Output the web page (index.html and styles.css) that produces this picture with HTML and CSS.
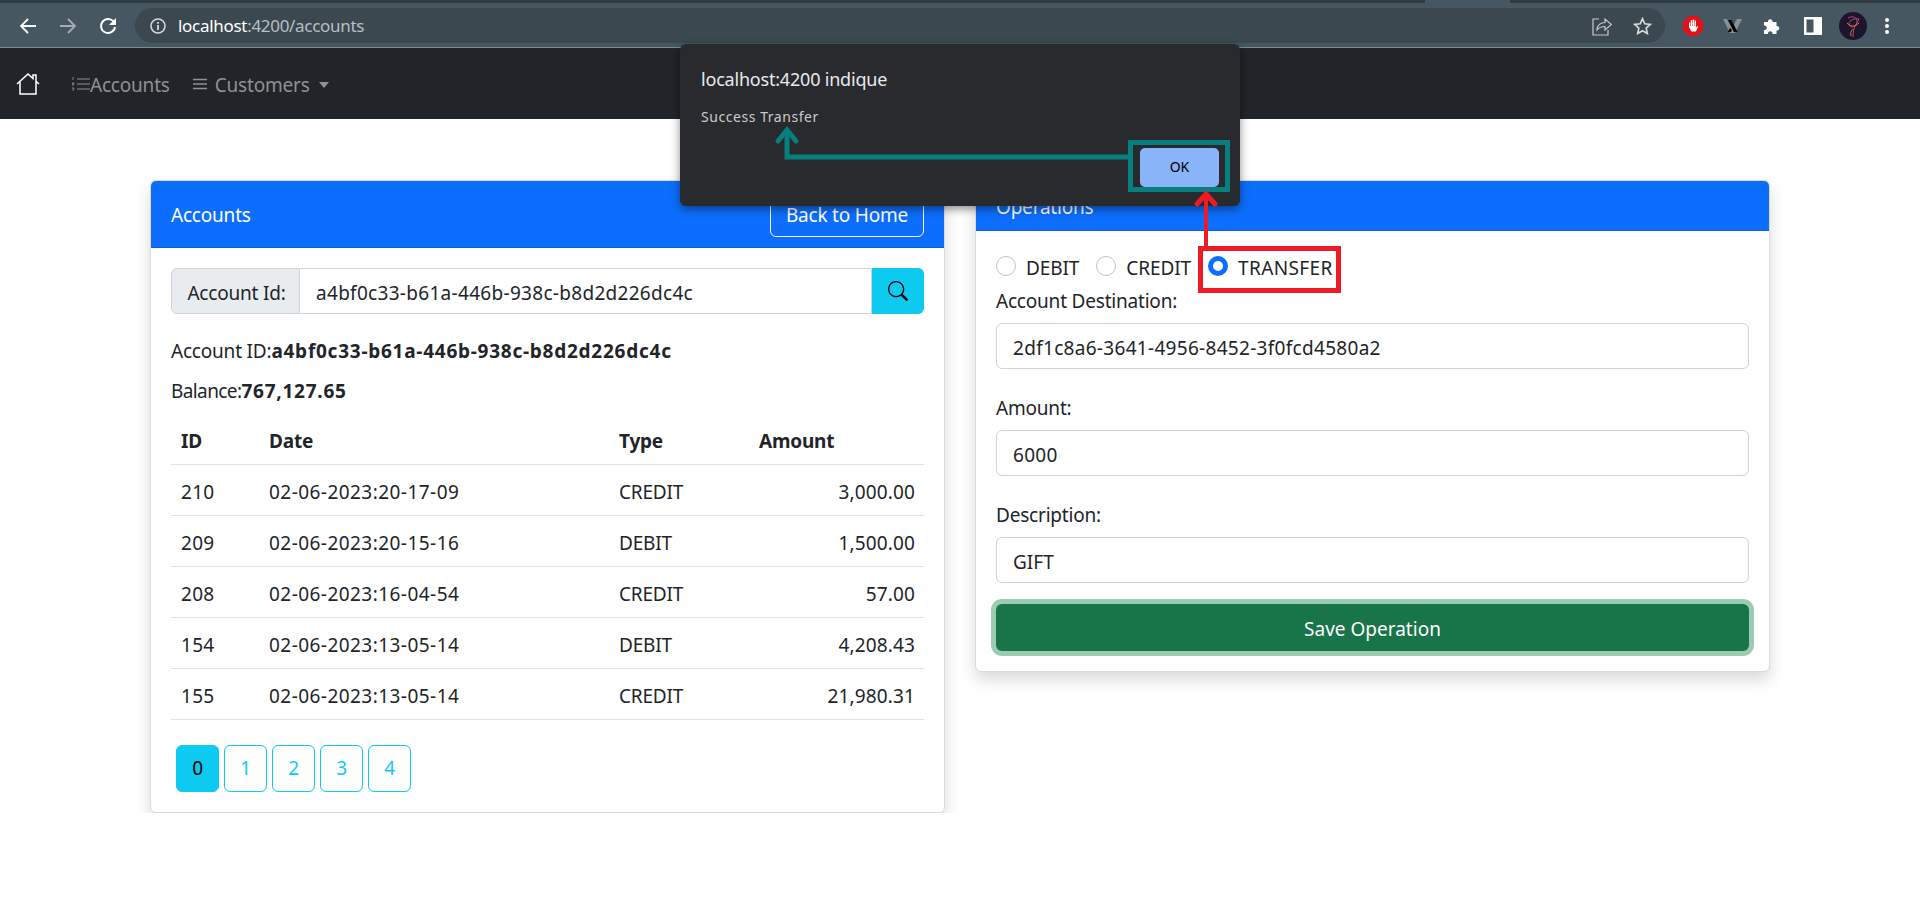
FILE: index.html
```html
<!DOCTYPE html>
<html lang="en">
<head>
    <meta charset="UTF-8">
    <title>Accounts</title>
    <link rel="stylesheet" href="styles.css">
</head>
<body>
    <div class="tabstrip"></div>
    <div class="toolbar">
        <svg class="tool-icon" width="18" height="18" viewBox="0 0 18 18"><path d="M17 9H2M9 2L2 9l7 7" fill="none" stroke="#fff" stroke-width="1.8"/></svg>
        <svg class="tool-icon dim" width="18" height="18" viewBox="0 0 18 18"><path d="M1 9h15M9 2l7 7-7 7" fill="none" stroke="#a3adb2" stroke-width="1.8"/></svg>
        <svg class="tool-icon" width="18" height="18" viewBox="0 0 18 18"><path d="M15.4 6A7 7 0 1 0 16 10" fill="none" stroke="#fff" stroke-width="1.9"/><path d="M17 1v7h-7z" fill="#fff"/></svg>
        <div class="omnibox">
            <svg width="16" height="16" viewBox="0 0 16 16"><circle cx="8" cy="8" r="7" fill="none" stroke="#d5d9db" stroke-width="1.6"/><path d="M8 7v5M8 4v1.8" stroke="#d5d9db" stroke-width="1.8"/></svg>
            <span class="url"><span class="host">localhost</span>:4200/accounts</span>
            <span class="omni-right">
                <svg width="20" height="20" viewBox="0 0 20 20"><path d="M7 3H1v16h15v-5" fill="none" stroke="#c4cacd" stroke-width="1.2"/><path d="M5 14c0-5 4-7.500 8-7.500V3l6.500 5.500L13 14v-3.500c-4 0-6 1-8 3.500z" fill="none" stroke="#c4cacd" stroke-width="1.2"/></svg>
                <svg width="19" height="18" viewBox="0 0 19 18"><path d="M9.500 1.800l2.300 5 5.400.6-4 3.700 1.100 5.400-4.800-2.700-4.800 2.700 1.100-5.400-4-3.700 5.400-.6z" fill="none" stroke="#d5d9db" stroke-width="1.700"/></svg>
            </span>
        </div>
        <div class="extensions">
            <svg width="22" height="22" viewBox="0 0 22 22"><path d="M7 1h8l6 6v8l-6 6H7l-6-6V7z" fill="#e3121a"/><path d="M7 12V7.500h1.300V11h.5V5h1.400v6h.5V4.500h1.400V11h.5V5.500h1.300V13l1.300-2 1 .6-2.300 4.900H9.500z" fill="#fff"/></svg>
            <svg width="21" height="16" viewBox="0 0 21 16"><path d="M1 1h4l5 9 5-9h5l-7 14h-5z" fill="#8a8f91"/><path d="M6 2h3.500l6 12H12zM6 14l2-4 2 2-1 2z" fill="#000"/></svg>
            <svg width="18" height="18" viewBox="0 0 18 18"><path d="M1 5h4a2.300 2.300 0 1 1 4.500 0h4v4a2.300 2.300 0 1 1 0 4.500V17h-4a2.300 2.300 0 1 0-4.500 0H1v-4a2.300 2.300 0 1 0 0-4.500z" fill="#fff"/></svg>
            <svg class="side-panel" width="18" height="18" viewBox="0 0 18 18"><path d="M0 0h18v18H0zM2.500 2.500v13h7v-13z" fill="#fff" fill-rule="evenodd"/></svg>
            <svg class="avatar" width="28" height="28" viewBox="0 0 28 28"><circle cx="14" cy="14" r="14" fill="#1d1530"/><path d="M9 6c5-3 10 0 9 5s-8 5-8 1 6-6 10-5c-2 5-6 7-6 18" fill="none" stroke="#b0506e" stroke-width="1"/><path d="M8 11c3 4 8 4 12 0M14 17c-2 2-3 4-2 7" fill="none" stroke="#d8742c" stroke-width="1"/></svg>
            <svg class="dots" width="4" height="16" viewBox="0 0 4 16"><circle cx="2" cy="2" r="2" fill="#fff"/><circle cx="2" cy="8" r="2" fill="#fff"/><circle cx="2" cy="14" r="2" fill="#fff"/></svg>
        </div>
    </div>

    <nav class="navbar">
        <svg class="home-icon" width="24" height="22" viewBox="0 0 24 22"><path d="M1 11L12 1l5 4.500V2h3v6.300l3 2.700M4 9v12h16V9" fill="none" stroke="#fff" stroke-width="1.500"/></svg>
        <a class="nav-link accounts-link" href="#">
            <svg width="18" height="16" viewBox="0 0 18 16"><path d="M5 3h13M5 8h13M5 13h13" stroke="#8f9194" stroke-width="1"/><path d="M1 1v3M0 7h2v1H0v1h2M0 12h2v1H1m-1 1h2" stroke="#8f9194" stroke-width=".8" fill="none"/></svg><span>Accounts</span>
        </a>
        <a class="nav-link customers-link" href="#">
            <svg width="14" height="12" viewBox="0 0 14 12"><path d="M0 1.500h14M0 6h14M0 10.500h14" stroke="#8f9194" stroke-width="1.600"/></svg>
            <span>Customers</span>
            <span class="caret"></span>
        </a>
    </nav>

    <div class="container">
        <div class="card">
            <div class="card-header accounts-header">
                <span class="header-title">Accounts</span>
                <a class="btn-outline-light" href="#">Back to Home</a>
            </div>
            <div class="card-body">
                <div class="input-group">
                    <span class="input-group-text">Account Id:</span>
                    <input class="group-input num" type="text" value="a4bf0c33-b61a-446b-938c-b8d2d226dc4c">
                    <button class="btn-search" type="button">
                        <svg width="20" height="20" viewBox="0 0 16 16"><path d="M11.742 10.344a6.500 6.500 0 1 0-1.397 1.398l3.850 3.850a1 1 0 0 0 1.415-1.414l-3.850-3.850zM12 6.500a5.500 5.500 0 1 1-11 0 5.500 5.500 0 0 1 11 0z"/></svg>
                    </button>
                </div>
                <p class="info first-info">Account ID:<b>a4bf0c33-b61a-446b-938c-b8d2d226dc4c</b></p>
                <p class="info balance">Balance:<b>767,127.65</b></p>
                <table class="table">
                    <colgroup>
                        <col class="col-id"><col class="col-date"><col class="col-type"><col>
                    </colgroup>
                    <thead>
                        <tr><th>ID</th><th>Date</th><th>Type</th><th>Amount</th></tr>
                    </thead>
                    <tbody>
                        <tr><td class="num">210</td><td class="date">02-06-2023:20-17-09</td><td class="type">CREDIT</td><td class="amount">3,000.00</td></tr>
                        <tr><td class="num">209</td><td class="date">02-06-2023:20-15-16</td><td class="type">DEBIT</td><td class="amount">1,500.00</td></tr>
                        <tr><td class="num">208</td><td class="date">02-06-2023:16-04-54</td><td class="type">CREDIT</td><td class="amount">57.00</td></tr>
                        <tr><td class="num">154</td><td class="date">02-06-2023:13-05-14</td><td class="type">DEBIT</td><td class="amount">4,208.43</td></tr>
                        <tr><td class="num">155</td><td class="date">02-06-2023:13-05-14</td><td class="type">CREDIT</td><td class="amount">21,980.31</td></tr>
                    </tbody>
                </table>
                <div class="pages">
                    <a class="page active" href="#">0</a>
                    <a class="page" href="#">1</a>
                    <a class="page" href="#">2</a>
                    <a class="page" href="#">3</a>
                    <a class="page" href="#">4</a>
                </div>
            </div>
        </div>

        <div class="card">
            <div class="card-header operations-header">Operations</div>
            <div class="card-body">
                <div class="radios">
                    <label class="radio-label"><input type="radio" name="type"><span>DEBIT</span></label>
                    <label class="radio-label"><input type="radio" name="type"><span>CREDIT</span></label>
                    <label class="radio-label transfer"><input type="radio" name="type" checked><span>TRANSFER</span></label>
                </div>
                <div class="form-group">
                    <label for="dest">Account Destination:</label>
                    <input id="dest" class="form-control num" type="text" value="2df1c8a6-3641-4956-8452-3f0fcd4580a2">
                </div>
                <div class="form-group">
                    <label for="amount">Amount:</label>
                    <input id="amount" class="form-control num" type="text" value="6000">
                </div>
                <div class="form-group">
                    <label for="description">Description:</label>
                    <input id="description" class="form-control" type="text" value="GIFT">
                </div>
                <button class="btn-save" type="button">Save Operation</button>
            </div>
        </div>
    </div>

    <div class="alert-dialog">
        <div class="alert-title">localhost:4200 indique</div>
        <div class="alert-text">Success Transfer</div>
        <button class="alert-ok" type="button">OK</button>
    </div>

    <!-- annotations drawn on top of the screenshot -->
    <svg class="annotations" width="1920" height="920" viewBox="0 0 1920 920">
        <rect x="1130.500" y="142.500" width="97" height="47" fill="none" stroke="#077f7f" stroke-width="5"/>
        <path d="M1128 157H787V130" fill="none" stroke="#077f7f" stroke-width="5"/>
        <path d="M778 141l9-11 9 11" fill="none" stroke="#077f7f" stroke-width="5" stroke-linecap="round"/>
        <rect x="1200.500" y="248.500" width="138" height="42" fill="none" stroke="#ed1c24" stroke-width="5"/>
        <path d="M1206 246V195" fill="none" stroke="#ed1c24" stroke-width="4"/>
        <path d="M1197 204l9-10 9 10" fill="none" stroke="#ed1c24" stroke-width="5" stroke-linecap="round"/>
    </svg>
</body>
</html>
```

FILE: styles.css
```css
body {
    font-family: "Noto Sans", "Open Sans", sans-serif;
    font-size: 19px;
    line-height: 27px;
    letter-spacing: -0.2px;
    margin: 0;
    background-color: #fff;
    color: #212529;
}
.num {
    letter-spacing: 0.3px;
}
.tabstrip {
    height: 3px;
    background: linear-gradient(to right, #2f3d42 1425px, #465761 1425px, #465761 1510px, #2f3d42 1510px);
}
.toolbar {
    height: 45px;
    box-sizing: border-box;
    padding: 5px 0 0 19px;
    display: flex;
    align-items: flex-start;
    background-color: #465761;
    border-bottom: 1px solid #7d8d94;
}
.tool-icon {
    margin: 9px 22px 0 0;
}
.tool-icon:nth-child(3) {
    margin-right: 18px;
}
.omnibox {
    width: 1530px;
    height: 35px;
    box-sizing: border-box;
    padding: 0 13px 0 15px;
    display: flex;
    align-items: center;
    border-radius: 18px;
    background-color: #3b4850;
}
.url {
    margin-left: 12px;
    font-size: 17px;
    letter-spacing: -0.3px;
    color: #b7bfc3;
}
.url .host {
    color: #fff;
}
.omni-right {
    margin-left: auto;
    display: flex;
    align-items: center;
    gap: 21px;
}
.extensions {
    margin-left: 17px;
    height: 35px;
    display: flex;
    align-items: center;
    gap: 20px;
}
.extensions svg:first-child {
    margin-right: -2px;
}
.side-panel {
    margin-left: 3px;
}
.avatar {
    margin-left: -3px;
}
.dots {
    margin-left: -2px;
}
.navbar {
    height: 71px;
    padding-left: 16px;
    display: flex;
    align-items: center;
    background-color: #212529;
}
.nav-link {
    color: #8f9194;
    text-decoration: none;
    display: flex;
    align-items: center;
}
.nav-link span:not(.caret) {
    padding-top: 4px;
}
.home-icon {
    margin-right: 32px;
}
.customers-link {
    margin-left: 23px;
}
.customers-link svg {
    margin-right: 8px;
}
.caret {
    margin: 2px 0 0 9px;
    border-top: 6px solid #8f9194;
    border-left: 5.500px solid transparent;
    border-right: 5.500px solid transparent;
}
.container {
    padding: 61px 150px 0;
    display: grid;
    grid-template-columns: 795px 795px;
    column-gap: 30px;
    align-items: start;
}
.card {
    border: 1px solid #d9dadb;
    border-radius: 6px;
    background-color: #fff;
    box-shadow: 0 8px 16px rgba(0, 0, 0, 0.15);
}
.card-header {
    box-sizing: border-box;
    padding: 0 20px;
    background-color: #0d6efd;
    color: #fff;
    border-bottom: 1px solid #0b5ed7;
    border-radius: 5px 5px 0 0;
}
.accounts-header {
    height: 67px;
    display: flex;
    align-items: center;
    justify-content: space-between;
}
.header-title {
    padding-top: 3px;
}
.operations-header {
    height: 50px;
    padding-top: 13px;
}
.btn-outline-light {
    width: 154px;
    height: 46px;
    box-sizing: border-box;
    padding-top: 3px;
    display: flex;
    align-items: center;
    justify-content: center;
    border: 1px solid #f8f9fa;
    border-radius: 6px;
    color: #fff;
    text-decoration: none;
}
.card-body {
    padding: 20px;
}
.input-group {
    display: flex;
    height: 46px;
}
.input-group-text {
    width: 129px;
    box-sizing: border-box;
    padding: 4px 0 0 2px;
    display: flex;
    align-items: center;
    justify-content: center;
    background-color: #e9ecef;
    border: 1px solid #ced4da;
    border-radius: 6px 0 0 6px;
}
.group-input {
    flex: 1;
    min-width: 0;
    padding: 4px 16px 0;
    border: 1px solid #ced4da;
    border-left: none;
    font: inherit;
    letter-spacing: 0.3px;
    color: #212529;
    outline: none;
}
.btn-search {
    width: 52px;
    border: none;
    border-radius: 0 6px 6px 0;
    background-color: #0dcaf0;
    padding: 0;
    display: flex;
    align-items: center;
    justify-content: center;
}
.info {
    margin: 13px 0 0;
}
.first-info {
    margin-top: 24px;
}
.info b {
    letter-spacing: 0.75px;
}
.balance {
    letter-spacing: -0.6px;
}
.table {
    width: 100%;
    margin-top: 13px;
    border-collapse: collapse;
    table-layout: fixed;
}
.col-id {
    width: 90px;
}
.col-date {
    width: 350px;
}
.col-type {
    width: 140px;
}
.table th {
    padding: 10px 8px 9px;
    text-align: left;
    font-weight: 700;
    border-bottom: 1px solid #dee2e6;
}
.table td {
    padding: 14px 8px 9px;
    border-bottom: 1px solid #dee2e6;
}
.table th:first-child,
.table td:first-child {
    padding-left: 10px;
}
.table .date {
    letter-spacing: 0.45px;
}
.table .type {
    letter-spacing: -0.2px;
}
.table .amount {
    padding-right: 9px;
    text-align: right;
    letter-spacing: 0.15px;
}
.pages {
    margin-top: 25px;
    padding-left: 5px;
    display: flex;
    gap: 5px;
}
.page {
    width: 43px;
    height: 47px;
    box-sizing: border-box;
    display: flex;
    align-items: center;
    justify-content: center;
    border: 1px solid #0dcaf0;
    border-radius: 6px;
    color: #0dcaf0;
    text-decoration: none;
}
.page.active {
    background-color: #0dcaf0;
    color: #000;
}
.radios {
    padding-top: 3px;
    display: flex;
    gap: 17px;
}
.radio-label {
    display: flex;
    align-items: center;
    letter-spacing: -0.1px;
}
.radio-label.transfer {
    letter-spacing: 0.4px;
}
.radio-label span {
    padding-top: 1px;
}
.radio-label input {
    appearance: none;
    width: 20px;
    height: 20px;
    margin: 0 10px 4px 0;
    border: 1px solid #bfc4c9;
    border-radius: 50%;
    background-color: #fff;
}
.radio-label input:checked {
    border: 5px solid #0d6efd;
}
.form-group label {
    display: block;
    padding-top: 2px;
    margin-bottom: 8px;
}
.form-group {
    margin-top: 24px;
}
.radios + .form-group {
    margin-top: 4px;
}
.form-control {
    display: block;
    width: 100%;
    height: 46px;
    box-sizing: border-box;
    padding: 3px 16px 0;
    border: 1px solid #ced4da;
    border-radius: 6px;
    font: inherit;
    color: #212529;
}
.form-control.num {
    letter-spacing: 0.3px;
}
.btn-save {
    display: block;
    width: 100%;
    height: 47px;
    margin-top: 21px;
    padding: 3px 0 0;
    border: none;
    border-radius: 6px;
    background-color: #18754a;
    box-shadow: 0 0 0 5px #9bcbb3;
    color: #fff;
    font: inherit;
    letter-spacing: 0;
}
.alert-dialog {
    position: absolute;
    left: 680px;
    top: 44px;
    width: 560px;
    height: 162px;
    box-sizing: border-box;
    padding: 23px 21px 0;
    border-radius: 6px;
    background-color: #292a2d;
    box-shadow: 0 3px 10px rgba(0, 0, 0, 0.45);
    color: #e8eaed;
}
.alert-title {
    font-size: 18px;
    line-height: 24px;
    letter-spacing: -0.2px;
}
.alert-text {
    margin-top: 17px;
    font-size: 14px;
    line-height: 18px;
    letter-spacing: 0.55px;
    color: #c9cbce;
}
.alert-ok {
    position: absolute;
    left: 460px;
    top: 104px;
    width: 79px;
    height: 39px;
    padding: 0 0 2px;
    border: none;
    border-radius: 5px;
    background-color: #8ab4f8;
    color: #000;
    font: 14px "Noto Sans", sans-serif;
}
.annotations {
    position: absolute;
    left: 0;
    top: 0;
    pointer-events: none;
}
```
